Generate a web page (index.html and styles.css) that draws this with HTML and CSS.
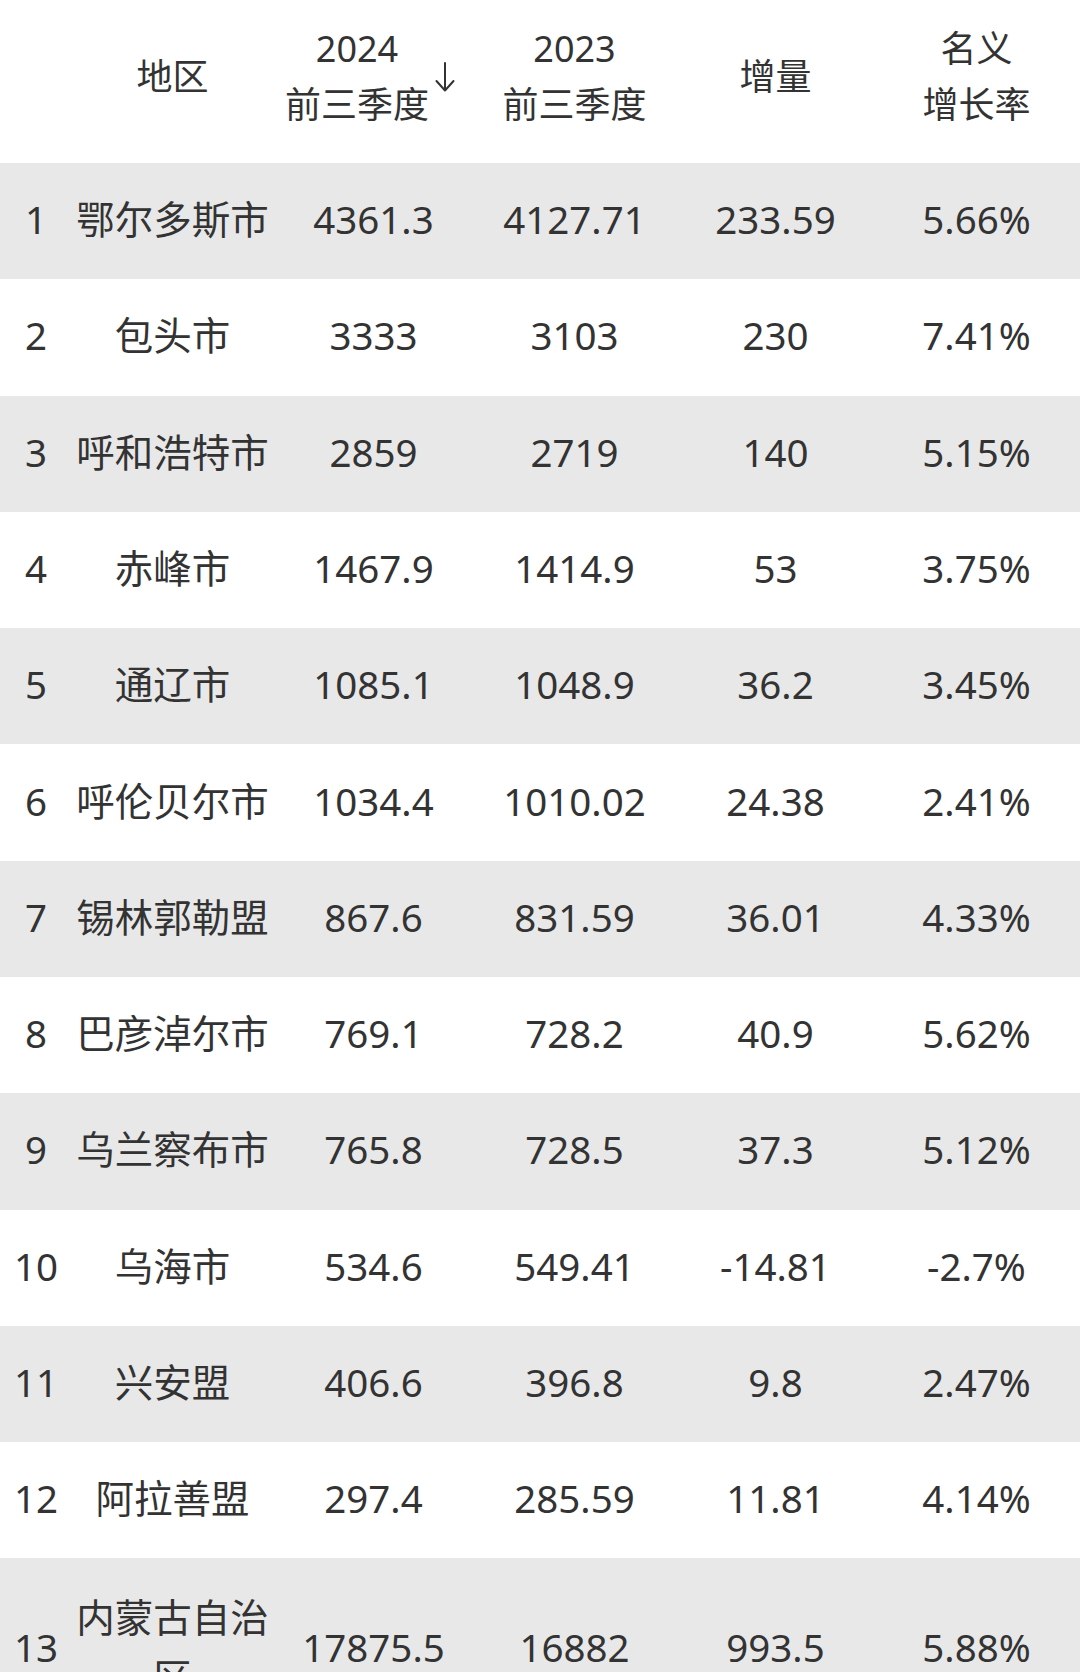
FILE: index.html
```html
<!DOCTYPE html>
<html lang="zh-CN">
<head>
<meta charset="utf-8">
<title>内蒙古各盟市2024前三季度GDP</title>
<link rel="stylesheet" href="styles.css">
</head>
<body>
<div class="table">
  <div class="row head">
    <div class="cell"></div>
    <div class="cell">地区</div>
    <div class="cell sorted">
      <span class="stack">2024<br>前三季度</span>
      <svg class="arrow" width="20" height="30" viewBox="0 0 20 30" aria-hidden="true"><path d="M10 1V28.5M1.5 19L10 28.5L18.5 19" fill="none" stroke="#333" stroke-width="2" stroke-linecap="round" stroke-linejoin="round"/></svg>
    </div>
    <div class="cell"><span class="stack">2023<br>前三季度</span></div>
    <div class="cell">增量</div>
    <div class="cell"><span class="stack">名义<br>增长率</span></div>
  </div>
  <div class="row shade"><div class="cell">1</div><div class="cell">鄂尔多斯市</div><div class="cell">4361.3</div><div class="cell">4127.71</div><div class="cell">233.59</div><div class="cell">5.66%</div></div>
  <div class="row"><div class="cell">2</div><div class="cell">包头市</div><div class="cell">3333</div><div class="cell">3103</div><div class="cell">230</div><div class="cell">7.41%</div></div>
  <div class="row shade"><div class="cell">3</div><div class="cell">呼和浩特市</div><div class="cell">2859</div><div class="cell">2719</div><div class="cell">140</div><div class="cell">5.15%</div></div>
  <div class="row"><div class="cell">4</div><div class="cell">赤峰市</div><div class="cell">1467.9</div><div class="cell">1414.9</div><div class="cell">53</div><div class="cell">3.75%</div></div>
  <div class="row shade"><div class="cell">5</div><div class="cell">通辽市</div><div class="cell">1085.1</div><div class="cell">1048.9</div><div class="cell">36.2</div><div class="cell">3.45%</div></div>
  <div class="row"><div class="cell">6</div><div class="cell">呼伦贝尔市</div><div class="cell">1034.4</div><div class="cell">1010.02</div><div class="cell">24.38</div><div class="cell">2.41%</div></div>
  <div class="row shade"><div class="cell">7</div><div class="cell">锡林郭勒盟</div><div class="cell">867.6</div><div class="cell">831.59</div><div class="cell">36.01</div><div class="cell">4.33%</div></div>
  <div class="row"><div class="cell">8</div><div class="cell">巴彦淖尔市</div><div class="cell">769.1</div><div class="cell">728.2</div><div class="cell">40.9</div><div class="cell">5.62%</div></div>
  <div class="row shade"><div class="cell">9</div><div class="cell">乌兰察布市</div><div class="cell">765.8</div><div class="cell">728.5</div><div class="cell">37.3</div><div class="cell">5.12%</div></div>
  <div class="row"><div class="cell">10</div><div class="cell">乌海市</div><div class="cell">534.6</div><div class="cell">549.41</div><div class="cell">-14.81</div><div class="cell">-2.7%</div></div>
  <div class="row shade"><div class="cell">11</div><div class="cell">兴安盟</div><div class="cell">406.6</div><div class="cell">396.8</div><div class="cell">9.8</div><div class="cell">2.47%</div></div>
  <div class="row"><div class="cell">12</div><div class="cell">阿拉善盟</div><div class="cell">297.4</div><div class="cell">285.59</div><div class="cell">11.81</div><div class="cell">4.14%</div></div>
  <div class="row shade total"><div class="cell">13</div><div class="cell">内蒙古自治区</div><div class="cell">17875.5</div><div class="cell">16882</div><div class="cell">993.5</div><div class="cell">5.88%</div></div>
</div>
</body>
</html>
```
FILE: styles.css
```css
html, body {
  margin: 0;
  padding: 0;
  background: #ffffff;
}

body {
  font-family: "Noto Sans", "Noto Sans CJK SC", sans-serif;
  color: #333333;
  width: 1080px;
  overflow: hidden;
}

.table {
  display: flex;
  flex-direction: column;
}

.row {
  display: grid;
  grid-template-columns: 72px 201px 201px 201px 201px 201px 3px;
  font-size: 38.5px;
  line-height: 60px;
  padding: 26.15px 0 30.15px;
}

.row.total {
  padding: 28.15px 0;
}

.row.shade {
  background: #e8e8e8;
}

.row.head {
  font-size: 36px;
  line-height: 56px;
  padding: 20.5px 0 30.5px;
}

.cell {
  display: flex;
  align-items: center;
  justify-content: center;
  text-align: center;
  white-space: normal;
}

.stack {
  display: block;
  text-align: center;
}

.sorted {
  gap: 6px;
  padding-right: 7px;
}

.arrow {
  display: block;
  flex: none;
}
```
